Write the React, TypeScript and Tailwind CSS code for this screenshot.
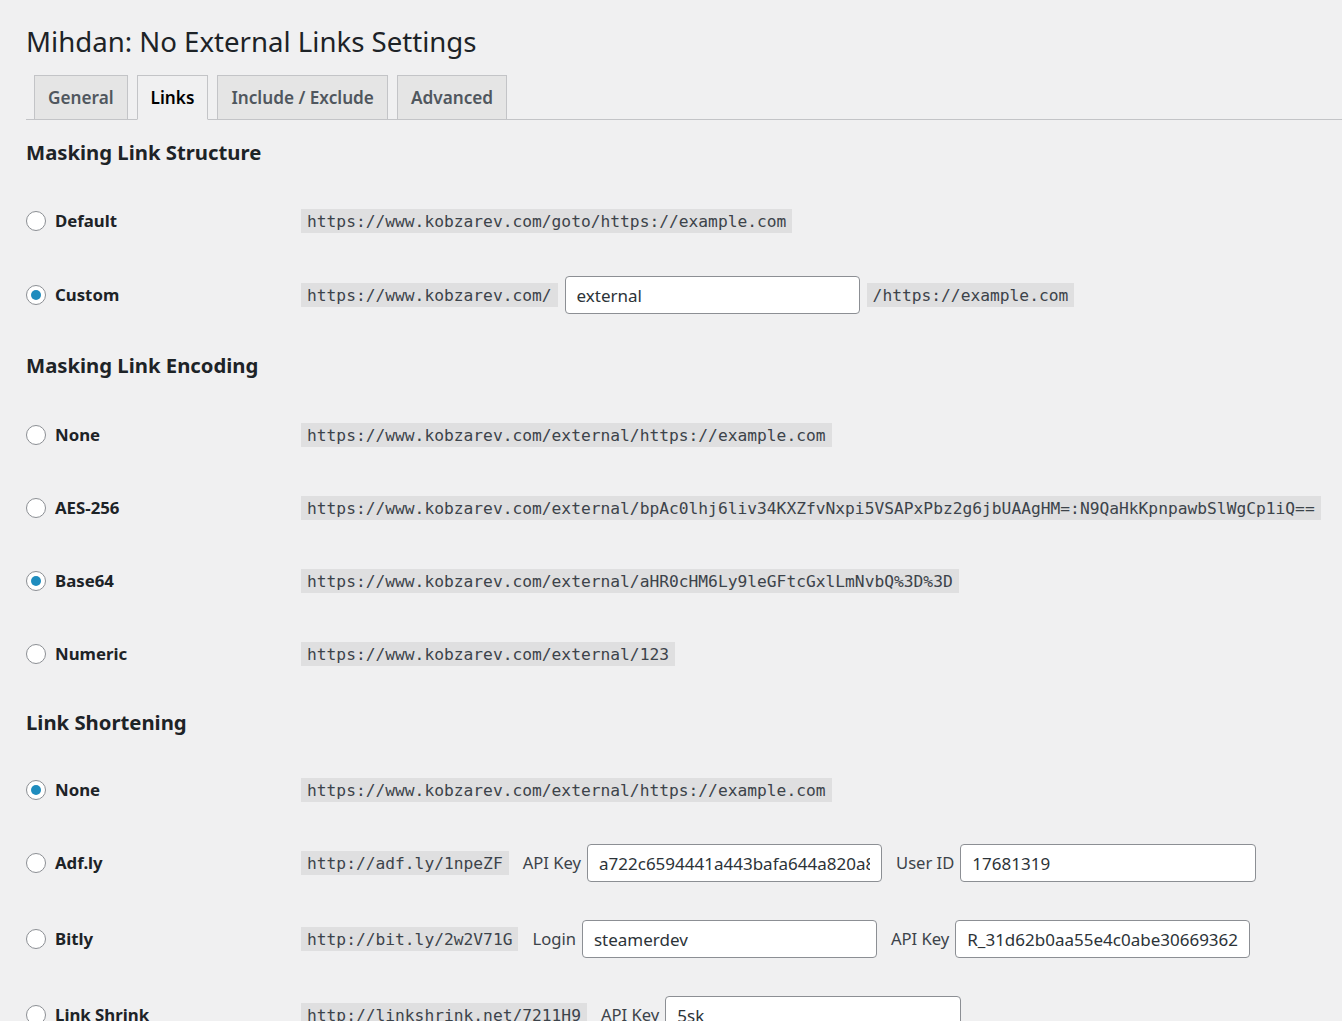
import React from 'react';

const ui = { fontFamily: '"Noto Sans", "Open Sans", sans-serif' };
const mono = { fontFamily: '"DejaVu Sans Mono", monospace' };

function Code({ children }: { children: React.ReactNode }) {
  return (
    <code
      style={mono}
      className="bg-[#dfdfe0] text-[#3c434a] text-[16.25px] leading-[18px] pt-[4px] pb-[2px] px-[6px] whitespace-nowrap"
    >
      {children}
    </code>
  );
}

function Radio({ checked }: { checked?: boolean }) {
  return (
    <span className="w-[20px] h-[20px] rounded-full border border-[#8c8f94] bg-white flex items-center justify-center shrink-0">
      {checked && <span className="w-[10px] h-[10px] rounded-full bg-[#1e8cbe]" />}
    </span>
  );
}

function TextInput({ value, width = 'w-[295px]' }: { value: string; width?: string }) {
  return (
    <input
      readOnly
      value={value}
      style={ui}
      className={`${width} h-[38px] bg-white border border-[#8c8f94] rounded-[4px] px-[11px] text-[17px] text-[#2c3338] outline-none`}
    />
  );
}

function Label({ children }: { children: React.ReactNode }) {
  return <span className="ml-[14px] mr-[6px] text-[16.6px] text-[#3c434a] whitespace-nowrap">{children}</span>;
}

function Row({
  label,
  checked,
  h,
  children,
}: {
  label: string;
  checked?: boolean;
  h: string;
  children: React.ReactNode;
}) {
  return (
    <div className={`flex items-center ${h}`}>
      <div className="w-[275px] flex items-center gap-[9px] shrink-0">
        <Radio checked={checked} />
        <span className="text-[16.8px] font-bold text-[#1d2327]">{label}</span>
      </div>
      <div className="flex items-center">{children}</div>
    </div>
  );
}

function Heading({ children, h }: { children: React.ReactNode; h: string }) {
  return (
    <div className={`flex items-center ${h}`}>
      <h2 className="text-[20.3px] font-bold text-[#1d2327]">{children}</h2>
    </div>
  );
}

export default function App() {
  const tabs = ['General', 'Links', 'Include / Exclude', 'Advanced'];
  return (
    <div style={ui} className="min-h-screen bg-[#f0f0f1] pl-[26px] overflow-hidden">
      <h1 className="pt-[22px] text-[27.6px] leading-[38px] text-[#1d2327] font-normal">
        Mihdan: No External Links Settings
      </h1>

      <div className="mt-[15px] flex border-b border-[#c3c4c7] pl-[8px] h-[45px] items-end">
        {tabs.map((t) => (
          <div
            key={t}
            className={`mr-[9px] -mb-px h-[45px] px-[13px] flex items-center border border-[#c3c4c7] text-[17.2px] font-semibold ${
              t === 'Links'
                ? 'bg-[#f0f0f1] border-b-[#f0f0f1] text-black'
                : 'bg-[#e5e5e5] text-[#50575e]'
            }`}
          >
            {t}
          </div>
        ))}
      </div>

      <Heading h="h-[64px]">Masking Link Structure</Heading>
      <Row label="Default" h="h-[74px]">
        <Code>https://www.kobzarev.com/goto/https://example.com</Code>
      </Row>
      <Row label="Custom" checked h="h-[74px]">
        <Code>https://www.kobzarev.com/</Code>
        <span className="mx-[7px] flex">
          <TextInput value="external" />
        </span>
        <Code>/https://example.com</Code>
      </Row>

      <Heading h="h-[66px]">Masking Link Encoding</Heading>
      <Row label="None" h="h-[73px]">
        <Code>https://www.kobzarev.com/external/https://example.com</Code>
      </Row>
      <Row label="AES-256" h="h-[73px]">
        <Code>
          https://www.kobzarev.com/external/bpAc0lhj6liv34KXZfvNxpi5VSAPxPbz2g6jbUAAgHM=:N9QaHkKpnpawbSlWgCp1iQ==
        </Code>
      </Row>
      <Row label="Base64" checked h="h-[73px]">
        <Code>https://www.kobzarev.com/external/aHR0cHM6Ly9leGFtcGxlLmNvbQ%3D%3D</Code>
      </Row>
      <Row label="Numeric" h="h-[73px]">
        <Code>https://www.kobzarev.com/external/123</Code>
      </Row>

      <Heading h="h-[64px]">Link Shortening</Heading>
      <Row label="None" checked h="h-[72px]">
        <Code>https://www.kobzarev.com/external/https://example.com</Code>
      </Row>
      <Row label="Adf.ly" h="h-[74px]">
        <Code>http://adf.ly/1npeZF</Code>
        <Label>API Key</Label>
        <TextInput value="a722c6594441a443bafa644a820a8e1f" />
        <Label>User ID</Label>
        <TextInput value="17681319" width="w-[296px]" />
      </Row>
      <Row label="Bitly" h="h-[78px]">
        <Code>http://bit.ly/2w2V71G</Code>
        <Label>Login</Label>
        <TextInput value="steamerdev" />
        <Label>API Key</Label>
        <TextInput value="R_31d62b0aa55e4c0abe30669362" />
      </Row>
      <Row label="Link Shrink" h="h-[74px]">
        <Code>http://linkshrink.net/7211H9</Code>
        <Label>API Key</Label>
        <TextInput value="5sk" width="w-[296px]" />
      </Row>
    </div>
  );
}
